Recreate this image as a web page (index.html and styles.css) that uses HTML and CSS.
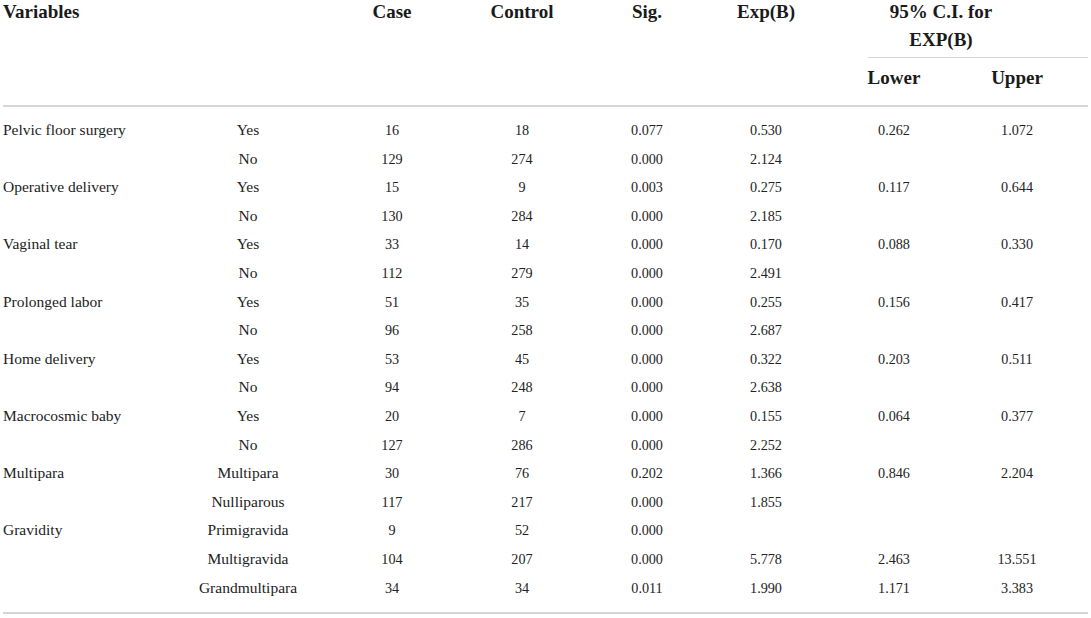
FILE: index.html
```html
<!DOCTYPE html>
<html lang="en">
<head>
<meta charset="utf-8">
<title>Table</title>
<link rel="stylesheet" href="styles.css">
</head>
<body>
<table class="tbl">
  <colgroup>
    <col class="c-var"><col class="c-sub"><col class="c-case"><col class="c-ctrl">
    <col class="c-sig"><col class="c-exp"><col class="c-low"><col class="c-up">
  </colgroup>
  <thead>
    <tr>
      <th class="h-var" colspan="2" rowspan="2">Variables</th>
      <th class="h-c" rowspan="2">Case</th>
      <th class="h-c" rowspan="2">Control</th>
      <th class="h-c" rowspan="2">Sig.</th>
      <th class="h-c" rowspan="2">Exp(B)</th>
      <th class="h-ci" colspan="2"><div class="ci-inner">95% C.I. for<br>EXP(B)</div></th>
    </tr>
    <tr>
      <th class="h-sub">Lower</th>
      <th class="h-sub h-up">Upper</th>
    </tr>
  </thead>
  <tbody>
    <tr><td class="lbl">Pelvic floor surgery</td><td class="lbl ctr">Yes</td><td class="num">16</td><td class="num">18</td><td class="num">0.077</td><td class="num">0.530</td><td class="num">0.262</td><td class="num up">1.072</td></tr>
    <tr><td class="lbl"></td><td class="lbl ctr">No</td><td class="num">129</td><td class="num">274</td><td class="num">0.000</td><td class="num">2.124</td><td class="num"></td><td class="num up"></td></tr>
    <tr><td class="lbl">Operative delivery</td><td class="lbl ctr">Yes</td><td class="num">15</td><td class="num">9</td><td class="num">0.003</td><td class="num">0.275</td><td class="num">0.117</td><td class="num up">0.644</td></tr>
    <tr><td class="lbl"></td><td class="lbl ctr">No</td><td class="num">130</td><td class="num">284</td><td class="num">0.000</td><td class="num">2.185</td><td class="num"></td><td class="num up"></td></tr>
    <tr><td class="lbl">Vaginal tear</td><td class="lbl ctr">Yes</td><td class="num">33</td><td class="num">14</td><td class="num">0.000</td><td class="num">0.170</td><td class="num">0.088</td><td class="num up">0.330</td></tr>
    <tr><td class="lbl"></td><td class="lbl ctr">No</td><td class="num">112</td><td class="num">279</td><td class="num">0.000</td><td class="num">2.491</td><td class="num"></td><td class="num up"></td></tr>
    <tr><td class="lbl">Prolonged labor</td><td class="lbl ctr">Yes</td><td class="num">51</td><td class="num">35</td><td class="num">0.000</td><td class="num">0.255</td><td class="num">0.156</td><td class="num up">0.417</td></tr>
    <tr><td class="lbl"></td><td class="lbl ctr">No</td><td class="num">96</td><td class="num">258</td><td class="num">0.000</td><td class="num">2.687</td><td class="num"></td><td class="num up"></td></tr>
    <tr><td class="lbl">Home delivery</td><td class="lbl ctr">Yes</td><td class="num">53</td><td class="num">45</td><td class="num">0.000</td><td class="num">0.322</td><td class="num">0.203</td><td class="num up">0.511</td></tr>
    <tr><td class="lbl"></td><td class="lbl ctr">No</td><td class="num">94</td><td class="num">248</td><td class="num">0.000</td><td class="num">2.638</td><td class="num"></td><td class="num up"></td></tr>
    <tr><td class="lbl">Macrocosmic baby</td><td class="lbl ctr">Yes</td><td class="num">20</td><td class="num">7</td><td class="num">0.000</td><td class="num">0.155</td><td class="num">0.064</td><td class="num up">0.377</td></tr>
    <tr><td class="lbl"></td><td class="lbl ctr">No</td><td class="num">127</td><td class="num">286</td><td class="num">0.000</td><td class="num">2.252</td><td class="num"></td><td class="num up"></td></tr>
    <tr><td class="lbl">Multipara</td><td class="lbl ctr">Multipara</td><td class="num">30</td><td class="num">76</td><td class="num">0.202</td><td class="num">1.366</td><td class="num">0.846</td><td class="num up">2.204</td></tr>
    <tr><td class="lbl"></td><td class="lbl ctr">Nulliparous</td><td class="num">117</td><td class="num">217</td><td class="num">0.000</td><td class="num">1.855</td><td class="num"></td><td class="num up"></td></tr>
    <tr><td class="lbl">Gravidity</td><td class="lbl ctr">Primigravida</td><td class="num">9</td><td class="num">52</td><td class="num">0.000</td><td class="num"></td><td class="num"></td><td class="num up"></td></tr>
    <tr><td class="lbl"></td><td class="lbl ctr">Multigravida</td><td class="num">104</td><td class="num">207</td><td class="num">0.000</td><td class="num">5.778</td><td class="num">2.463</td><td class="num up">13.551</td></tr>
    <tr><td class="lbl"></td><td class="lbl ctr">Grandmultipara</td><td class="num">34</td><td class="num">34</td><td class="num">0.011</td><td class="num">1.990</td><td class="num">1.171</td><td class="num up">3.383</td></tr>
  </tbody>
</table>
</body>
</html>
```

FILE: styles.css
```css
html, body {
  margin: 0;
  padding: 0;
  background: #ffffff;
}

body {
  font-family: "Liberation Serif", "Times New Roman", serif;
  color: #222222;
}

.tbl {
  margin: -2px 0 0 3px;
  width: 1085px;
  table-layout: fixed;
  border-collapse: separate;
  border-spacing: 0;
}

.c-var { width: 167px; }
.c-sub { width: 156px; }
.c-case { width: 132px; }
.c-ctrl { width: 128px; }
.c-sig { width: 122px; }
.c-exp { width: 116px; }
.c-low { width: 140px; }
.c-up { width: 124px; }

thead th {
  font-size: 19px;
  font-weight: bold;
  line-height: 28px;
  color: #1a1a1a;
  padding: 0;
  vertical-align: top;
}

.h-var {
  text-align: left;
}

.h-c {
  text-align: center;
}

.h-ci {
  padding: 0;
}

.ci-inner {
  margin-left: 44px;
  padding: 0 74px 3px 0;
  border-bottom: 1px solid #d6d6d6;
  text-align: center;
}

.h-sub {
  text-align: center;
  padding: 6px 0 13px 0;
}

.h-up {
  padding-right: 18px;
}

tbody td {
  padding: 0;
  line-height: 28.6px;
  white-space: nowrap;
  vertical-align: middle;
}

tbody tr:first-child td {
  border-top: 2px solid #d6d6d6;
  padding-top: 9px;
}

tbody tr:last-child td {
  border-bottom: 2px solid #d6d6d6;
  padding-bottom: 10px;
}

.lbl {
  font-size: 15.5px;
  text-align: left;
}

.ctr {
  text-align: center;
}

.num {
  font-size: 14.2px;
  text-align: center;
}

.num.up {
  padding-right: 18px;
}
```
